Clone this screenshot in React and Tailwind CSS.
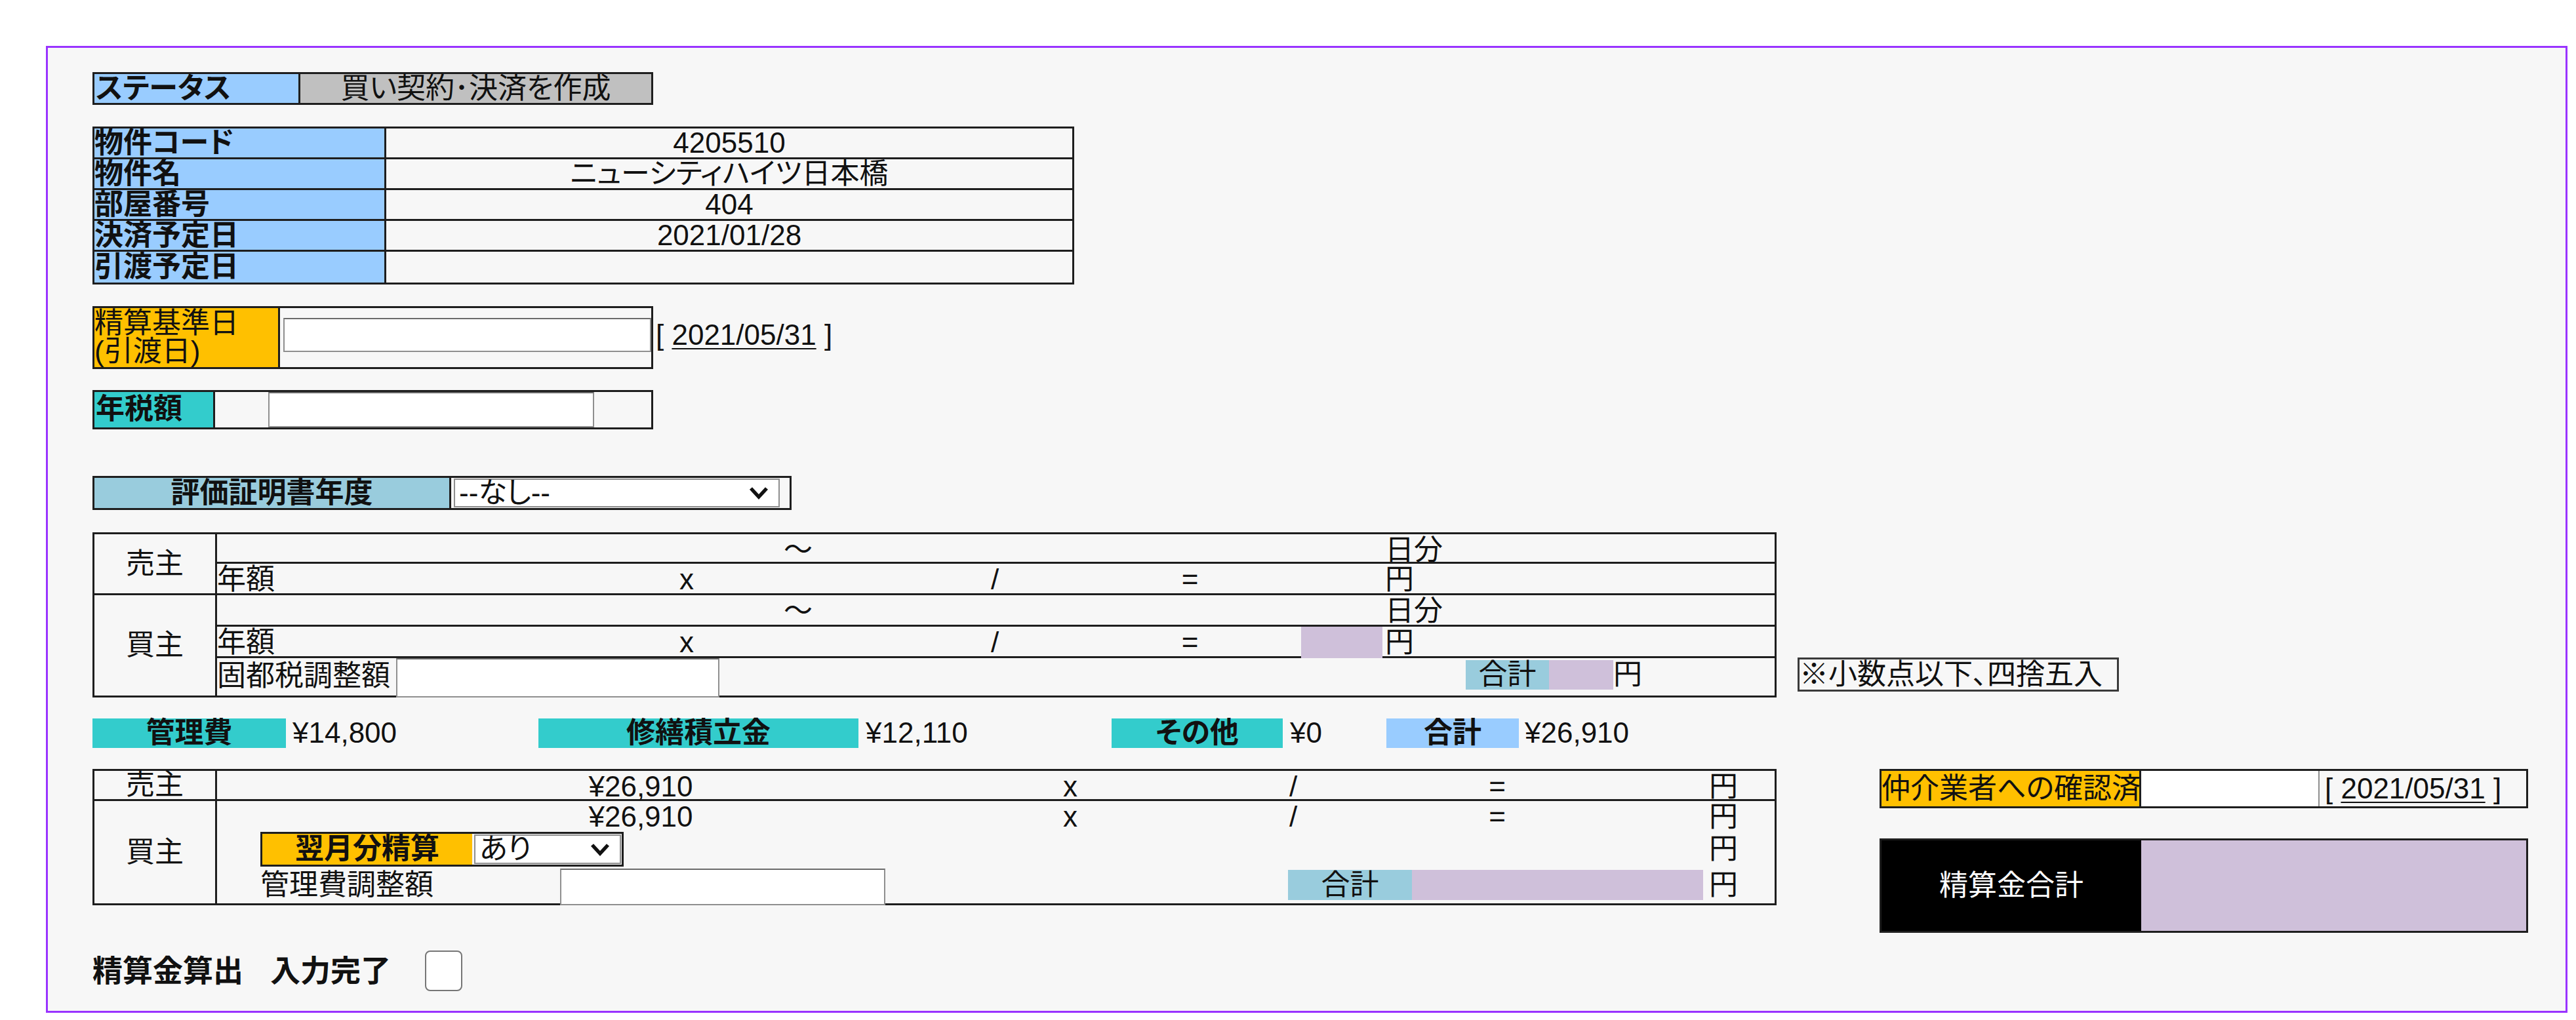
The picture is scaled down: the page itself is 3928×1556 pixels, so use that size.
import React from 'react';

const line = 'border-[#1e1e1e]';
const lavender = 'bg-[#cfc0da]';
const colsA = 'grid grid-cols-[273px_393px_100px_240px_360px_235px_52px_124px_127px_127px_98px_1fr]';
const colsB = 'grid grid-cols-[523px_246px_492px_80px_260px_80px_231px_80px_1fr_100px]';

const propertyRows = [
    { label: '物件コード', value: '4205510' },
    { label: '物件名', value: 'ニューシティハイツ日本橋' },
    { label: '部屋番号', value: '404' },
    { label: '決済予定日', value: '2021/01/28' },
    { label: '引渡予定日', value: '' },
];

function Chevron() {
    return (
        <svg width="32" height="22" viewBox="0 0 32 22" className="shrink-0">
            <path d="M4 4 L16 17 L28 4" fill="none" stroke="#111" strokeWidth="5.5" />
        </svg>
    );
}

function FakeSelect({ value, className = '' }) {
    return (
        <div className={`flex items-center justify-between bg-white border-2 border-[#8f8f8f] pl-[6px] pr-[14px] ${className}`}>
            <span>{value}</span>
            <Chevron />
        </div>
    );
}

function TextInput({ className = '' }) {
    return <div className={`bg-white border-2 border-[#8f8f8f] border-t-[#6a6a6a] ${className}`} />;
}

function DateLink({ date }) {
    return (
        <span className="whitespace-pre">
            {'[ '}
            <span className="underline decoration-2 underline-offset-[5px]">{date}</span>
            {' ]'}
        </span>
    );
}

// 固都税の日割り行
function PeriodRow({ h = 'h-[45px]' }) {
    return (
        <div className={`${colsA} ${h} items-center border-b-[3px] ${line}`}>
            <div className="col-start-4 text-center">～</div>
            <div className="col-start-9 pl-[4px]">日分</div>
        </div>
    );
}

function YearAmountRow({ highlight, h = 'h-[45px]', bordered }) {
    return (
        <div className={`${colsA} ${h} items-center ${bordered ? `border-b-[3px] ${line}` : ''}`}>
            <div>年額</div>
            <div className="col-start-3 text-center">x</div>
            <div className="col-start-5 text-center">/</div>
            <div className="col-start-6 text-center">=</div>
            {highlight && <div className={`col-start-8 self-stretch ${lavender}`} />}
            <div className="col-start-9 pl-[4px]">円</div>
        </div>
    );
}

function FormulaRow({ h }) {
    return (
        <div className={`${colsB} ${h} items-center`}>
            <div className="col-start-2 text-center">¥26,910</div>
            <div className="col-start-4 text-center">x</div>
            <div className="col-start-6 text-center">/</div>
            <div className="col-start-8 text-center">=</div>
            <div className="col-start-10">円</div>
        </div>
    );
}

export default function App() {
    return (
        <div className="min-h-screen bg-white pt-[70px] pl-[70px] text-[44px] leading-[1.1] text-[#111] [font-family:'Liberation_Sans','Noto_Sans_CJK_JP',sans-serif] [font-feature-settings:'palt']">
            <div className="w-[3845px] border-[3px] border-[#9933ff] bg-[#f7f7f7] pl-[68px] pt-[37px] pb-[30px] flex flex-col items-start">

                {/* ステータス */}
                <div className={`flex h-[50px] w-[855px] border-[3px] ${line}`}>
                    <div className={`w-[314px] bg-[#99ccff] font-bold flex items-center pl-[2px] border-r-[3px] ${line}`}>ステータス</div>
                    <div className="flex-1 bg-[#c0c0c0] flex items-center justify-center">買い契約･決済を作成</div>
                </div>

                {/* 物件情報 */}
                <div className={`mt-[33px] w-[1497px] border-[3px] ${line}`}>
                    {propertyRows.map((row, i) => (
                        <div
                            key={row.label}
                            className={`flex h-[47px] ${i < propertyRows.length - 1 ? `border-b-[3px] ${line}` : ''}`}
                        >
                            <div className={`w-[445px] bg-[#99ccff] font-bold flex items-center border-r-[3px] ${line}`}>{row.label}</div>
                            <div className="flex-1 flex items-center justify-center">{row.value}</div>
                        </div>
                    ))}
                </div>

                {/* 精算基準日 */}
                <div className="mt-[33px] flex items-start">
                    <div className={`flex h-[96px] w-[855px] border-[3px] ${line}`}>
                        <div className={`w-[283px] bg-[#ffc000] leading-[43px] pt-[1px] border-r-[3px] ${line}`}>
                            精算基準日<br />(引渡日)
                        </div>
                        <div className="flex-1 flex items-center pl-[5px]">
                            <TextInput className="h-[52px] w-full -mt-[8px]" />
                        </div>
                    </div>
                    <div className="mt-[20px] ml-[4px]">
                        <DateLink date="2021/05/31" />
                    </div>
                </div>

                {/* 年税額 */}
                <div className={`mt-[32px] flex h-[60px] w-[855px] border-[3px] ${line}`}>
                    <div className={`w-[184px] bg-[#33cccc] font-bold pl-[2px] pt-[2px] border-r-[3px] ${line}`}>年税額</div>
                    <TextInput className="ml-[81px] w-[497px] h-full" />
                </div>

                {/* 評価証明書年度 */}
                <div className={`mt-[71px] flex h-[52px] w-[1066px] border-[3px] ${line}`}>
                    <div className={`w-[544px] bg-[#99ccdd] font-bold flex items-center justify-center border-r-[3px] ${line}`}>評価証明書年度</div>
                    <FakeSelect value="--なし--" className="ml-[4px] w-[497px] my-[1px]" />
                </div>

                {/* 固都税 */}
                <div className="mt-[34px] flex items-end">
                    <div className={`w-[2568px] border-[3px] ${line}`}>
                        <div className={`flex border-b-[3px] ${line}`}>
                            <div className={`w-[187px] shrink-0 flex items-center justify-center border-r-[3px] ${line}`}>売主</div>
                            <div className="flex-1 flex flex-col">
                                <PeriodRow />
                                <YearAmountRow />
                            </div>
                        </div>
                        <div className="flex">
                            <div className={`w-[187px] shrink-0 flex items-center justify-center border-r-[3px] ${line}`}>買主</div>
                            <div className="flex-1 flex flex-col">
                                <PeriodRow h="h-[48px]" />
                                <YearAmountRow highlight h="h-[48px]" bordered />
                                <div className={`${colsA} h-[57px]`}>
                                    <div className="pt-[3px]">固都税調整額</div>
                                    <TextInput className="col-span-2 -mb-[3px]" />
                                    <div className="col-start-10 h-[45px] mt-[3px] bg-[#99ccdd] flex items-center justify-center">合計</div>
                                    <div className={`h-[45px] mt-[3px] ${lavender}`} />
                                    <div className="h-[45px] mt-[3px] flex items-center">円</div>
                                </div>
                            </div>
                        </div>
                    </div>
                    <div className="ml-[32px] mb-[9px] w-[490px] h-[52px] border-[3px] border-[#3a3a3a] flex items-center whitespace-nowrap">
                        ※小数点以下、四捨五入
                    </div>
                </div>

                {/* 管理費等 */}
                <div className="mt-[32px] flex h-[45px] items-stretch">
                    <div className="w-[680px] flex">
                        <div className="w-[295px] bg-[#33cccc] font-bold flex items-center justify-center">管理費</div>
                        <div className="ml-[10px] flex items-center">¥14,800</div>
                    </div>
                    <div className="w-[874px] flex">
                        <div className="w-[488px] bg-[#33cccc] font-bold flex items-center justify-center">修繕積立金</div>
                        <div className="ml-[11px] flex items-center">¥12,110</div>
                    </div>
                    <div className="w-[419px] flex">
                        <div className="w-[261px] bg-[#33cccc] font-bold flex items-center justify-center">その他</div>
                        <div className="ml-[11px] flex items-center">¥0</div>
                    </div>
                    <div className="flex">
                        <div className="w-[202px] bg-[#99ccff] font-bold flex items-center justify-center">合計</div>
                        <div className="ml-[9px] flex items-center">¥26,910</div>
                    </div>
                </div>

                {/* 管理費精算 + 精算金合計 */}
                <div className="mt-[32px] flex items-start">
                    <div className={`w-[2568px] border-[3px] ${line}`}>
                        <div className={`flex h-[46px] border-b-[3px] ${line}`}>
                            <div className={`w-[187px] shrink-0 flex items-center justify-center border-r-[3px] ${line}`}>売主</div>
                            <div className="flex-1">
                                <FormulaRow h="h-full" />
                            </div>
                        </div>
                        <div className="flex">
                            <div className={`w-[187px] shrink-0 flex items-center justify-center border-r-[3px] ${line}`}>買主</div>
                            <div className="flex-1 flex flex-col">
                                <FormulaRow h="h-[47px]" />
                                <div className="flex h-[53px] items-stretch">
                                    <div className={`ml-[66px] w-[554px] flex border-[3px] ${line}`}>
                                        <div className="w-[320px] bg-[#ffc000] font-bold flex items-center justify-center">翌月分精算</div>
                                        <FakeSelect value="あり" className="flex-1 ml-[3px] my-[1px] mr-[1px] pl-[4px] pr-[12px]" />
                                    </div>
                                    <div className="flex-1" />
                                    <div className="w-[100px] flex items-center">円</div>
                                </div>
                                <div className="flex h-[56px] items-stretch">
                                    <div className="ml-[66px] w-[457px] flex items-center">管理費調整額</div>
                                    <TextInput className="w-[496px] mt-[3px] -mb-[3px]" />
                                    <div className="w-[614px]" />
                                    <div className="w-[189px] my-[5px] bg-[#99ccdd] flex items-center justify-center">合計</div>
                                    <div className={`w-[444px] my-[5px] ${lavender}`} />
                                    <div className="flex-1" />
                                    <div className="w-[100px] flex items-center">円</div>
                                </div>
                            </div>
                        </div>
                    </div>

                    <div className="ml-[157px] w-[989px] flex flex-col">
                        <div className={`flex h-[60px] border-[3px] ${line}`}>
                            <div className={`w-[396px] bg-[#ffc000] flex items-center whitespace-nowrap border-r-[3px] ${line}`}>仲介業者への確認済</div>
                            <div className="w-[270px] bg-white" />
                            <div className="flex-1 flex items-center pl-[8px] border-l-2 border-[#8f8f8f]">
                                <DateLink date="2021/05/31" />
                            </div>
                        </div>
                        <div className={`mt-[46px] flex h-[144px] border-[3px] ${line}`}>
                            <div className="w-[396px] bg-black text-white flex items-center justify-center">精算金合計</div>
                            <div className={`flex-1 ${lavender}`} />
                        </div>
                    </div>
                </div>

                {/* 入力完了 */}
                <div className="mt-[27px] flex items-center h-[62px]">
                    <span className="text-[46px] font-bold">精算金算出</span>
                    <span className="ml-[41px] text-[46px] font-bold">入力完了</span>
                    <div className="ml-[52px] w-[57px] h-[62px] rounded-[8px] border-2 border-[#767676] bg-white" />
                </div>
            </div>
        </div>
    );
}
